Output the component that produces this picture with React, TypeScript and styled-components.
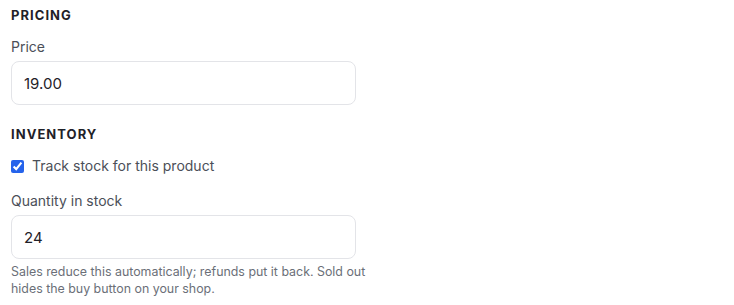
import React from "react";
import styled, { createGlobalStyle } from "styled-components";

const Global = createGlobalStyle`
  html, body { margin: 0; padding: 0; background: #ffffff; }
  body { font-family: Inter, "Noto Sans", sans-serif; color: #1f2128; }
  * { box-sizing: border-box; }
`;

const Page = styled.div`
  padding: 5px 11px 0;
  width: 400px;
  display: flex;
  flex-direction: column;
  gap: 19px;
`;

const Section = styled.section`
  display: flex;
  flex-direction: column;
`;

const Heading = styled.h3`
  margin: 0 0 12px;
  font-size: 13px;
  line-height: 20px;
  font-weight: 700;
  letter-spacing: 0.08em;
  text-transform: uppercase;
  color: #1f2128;
`;

const Field = styled.label`
  display: flex;
  flex-direction: column;
  gap: 4px;
`;

const LabelText = styled.span`
  font-size: 14px;
  line-height: 20px;
  color: #4b4f58;
`;

const Input = styled.input`
  width: 345px;
  height: 44px;
  padding: 0 12px;
  border: 1px solid #e3e4e8;
  border-radius: 8px;
  font-family: inherit;
  font-size: 15px;
  color: #1f2128;
  background: #fff;
  outline: none;
`;

const CheckRow = styled.label`
  display: flex;
  align-items: center;
  gap: 8px;
  font-size: 14px;
  line-height: 20px;
  color: #4b4f58;
  margin-bottom: 15px;
`;

const Check = styled.input`
  margin: 0;
  width: 13px;
  height: 13px;
  accent-color: #2563eb;
`;

const Help = styled.p`
  margin: 4px 0 0;
  width: 362px;
  font-size: 12.4px;
  line-height: 17px;
  color: #6b6f78;
`;

export default function App() {
  return (
    <>
      <Global />
      <Page>
        <Section>
          <Heading>Pricing</Heading>
          <Field>
            <LabelText>Price</LabelText>
            <Input defaultValue="19.00" />
          </Field>
        </Section>
        <Section>
          <Heading>Inventory</Heading>
          <CheckRow>
            <Check type="checkbox" defaultChecked />
            Track stock for this product
          </CheckRow>
          <Field>
            <LabelText>Quantity in stock</LabelText>
            <Input defaultValue="24" />
          </Field>
          <Help>
            Sales reduce this automatically; refunds put it back. Sold out hides the buy button on your shop.
          </Help>
        </Section>
      </Page>
    </>
  );
}
